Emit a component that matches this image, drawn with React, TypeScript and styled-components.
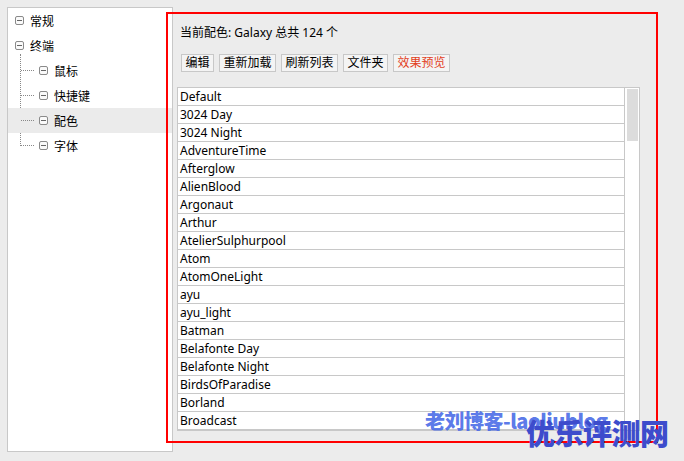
import React from 'react';
import styled, { createGlobalStyle } from 'styled-components';

const GlobalStyle = createGlobalStyle`
  html, body {
    margin: 0;
    padding: 0;
    background: #ececec;
  }
  body {
    font-family: "Noto Sans", "Noto Sans CJK SC", sans-serif;
    font-size: 12px;
    color: #000;
  }
`;

// Whole window: tree on the left, scheme list on the right.
const Window = styled.div`
  position: relative;
  width: 684px;
  height: 461px;
  display: flex;
  padding: 7px 0 0 7px;
  box-sizing: border-box;
  gap: 4px;
  overflow: hidden;
`;

const TreePanel = styled.nav`
  width: 166px;
  height: 445px;
  box-sizing: border-box;
  background: #fff;
  border: 1px solid #c8c8c8;
  padding-top: 0;
`;

const TreeRow = styled.div<{ $level: number; $selected?: boolean }>`
  height: 25px;
  display: flex;
  align-items: center;
  gap: 6px;
  padding-left: ${p => (p.$level === 0 ? 7 : 31)}px;
  background: ${p => (p.$selected ? '#ebebeb' : 'transparent')};
  position: relative;
`;

// Small boxed minus used for expanded nodes.
const Toggle = styled.span`
  width: 9px;
  height: 9px;
  box-sizing: border-box;
  border: 1px solid #8a8a8a;
  border-radius: 2px;
  background: #fafafa;
  position: relative;
  flex: none;
  &::after {
    content: '';
    position: absolute;
    left: 1px;
    right: 1px;
    top: 3px;
    height: 1px;
    background: #666;
  }
`;

const Children = styled.div`
  position: relative;
  &::before {
    content: '';
    position: absolute;
    left: 12px;
    top: -4px;
    bottom: 12px;
    border-left: 1px dotted #888;
  }
`;

const Connector = styled.span`
  position: absolute;
  left: 13px;
  top: 12px;
  width: 13px;
  border-top: 1px dotted #888;
`;

const Content = styled.section`
  width: 463px;
  display: flex;
  flex-direction: column;
`;

const CurrentScheme = styled.div`
  margin: 17px 0 0 3px;
  height: 18px;
  line-height: 18px;
`;

const Toolbar = styled.div`
  display: flex;
  gap: 5px;
  margin: 12px 0 0 4px;
`;

const Button = styled.button<{ $accent?: boolean }>`
  height: 18px;
  padding: 0 3.5px;
  border: 1px solid #c8c8c8;
  background: #f4f4f4;
  font: inherit;
  line-height: 16px;
  color: ${p => (p.$accent ? '#e2401c' : '#000')};
  border-radius: 0;
`;

const SchemeList = styled.div`
  margin-top: 15px;
  height: 344px;
  box-sizing: border-box;
  border: 1px solid #c8c8c8;
  background: #fff;
  display: flex;
`;

const Rows = styled.div`
  flex: 1;
  overflow: hidden;
`;

const Row = styled.div`
  height: 18px;
  box-sizing: border-box;
  border-bottom: 1px solid #c8c8c8;
  padding-left: 2px;
  line-height: 17px;
  white-space: nowrap;
`;

const ScrollTrack = styled.div`
  width: 11px;
  border-left: 1px solid #c8c8c8;
  padding: 1px 1px 0 2px;
`;

const ScrollThumb = styled.div`
  height: 52px;
  background: #dcdcdc;
`;

// Screenshot annotations laid over the window.
const Highlight = styled.div`
  position: absolute;
  left: 166px;
  top: 12px;
  width: 492px;
  height: 431px;
  box-sizing: border-box;
  border: 2px solid #ff0000;
  pointer-events: none;
`;

const Watermark = styled.div<{ $x: number; $y: number; $size: number; $color: string }>`
  position: absolute;
  left: ${p => p.$x}px;
  top: ${p => p.$y}px;
  font-family: "Noto Sans CJK SC", sans-serif;
  font-weight: 900;
  font-size: ${p => p.$size}px;
  line-height: 1;
  color: ${p => p.$color};
  white-space: nowrap;
  letter-spacing: -0.5px;
  pointer-events: none;
`;

const schemes = [
  'Default', '3024 Day', '3024 Night', 'AdventureTime', 'Afterglow', 'AlienBlood',
  'Argonaut', 'Arthur', 'AtelierSulphurpool', 'Atom', 'AtomOneLight', 'ayu', 'ayu_light',
  'Batman', 'Belafonte Day', 'Belafonte Night', 'BirdsOfParadise', 'Borland', 'Broadcast',
];

const subItems = ['鼠标', '快捷键', '配色', '字体'];

export default function App() {
  return (
    <>
      <GlobalStyle />
      <Window>
        <TreePanel>
          <TreeRow $level={0}><Toggle />常规</TreeRow>
          <TreeRow $level={0}><Toggle />终端</TreeRow>
          <Children>
            {subItems.map(item => (
              <TreeRow key={item} $level={1} $selected={item === '配色'}>
                <Connector />
                <Toggle />
                {item}
              </TreeRow>
            ))}
          </Children>
        </TreePanel>
        <Content>
          <CurrentScheme>当前配色: Galaxy 总共 124 个</CurrentScheme>
          <Toolbar>
            <Button>编辑</Button>
            <Button>重新加载</Button>
            <Button>刷新列表</Button>
            <Button>文件夹</Button>
            <Button $accent>效果预览</Button>
          </Toolbar>
          <SchemeList>
            <Rows>
              {schemes.map(s => <Row key={s}>{s}</Row>)}
            </Rows>
            <ScrollTrack><ScrollThumb /></ScrollTrack>
          </SchemeList>
        </Content>
        <Highlight />
        <Watermark $x={425} $y={411} $size={20} $color="rgba(70, 105, 230, 0.9)">老刘博客-laoliublog</Watermark>
        <Watermark $x={526} $y={418} $size={29} $color="#3d4ccc">优乐评测网</Watermark>
      </Window>
    </>
  );
}
